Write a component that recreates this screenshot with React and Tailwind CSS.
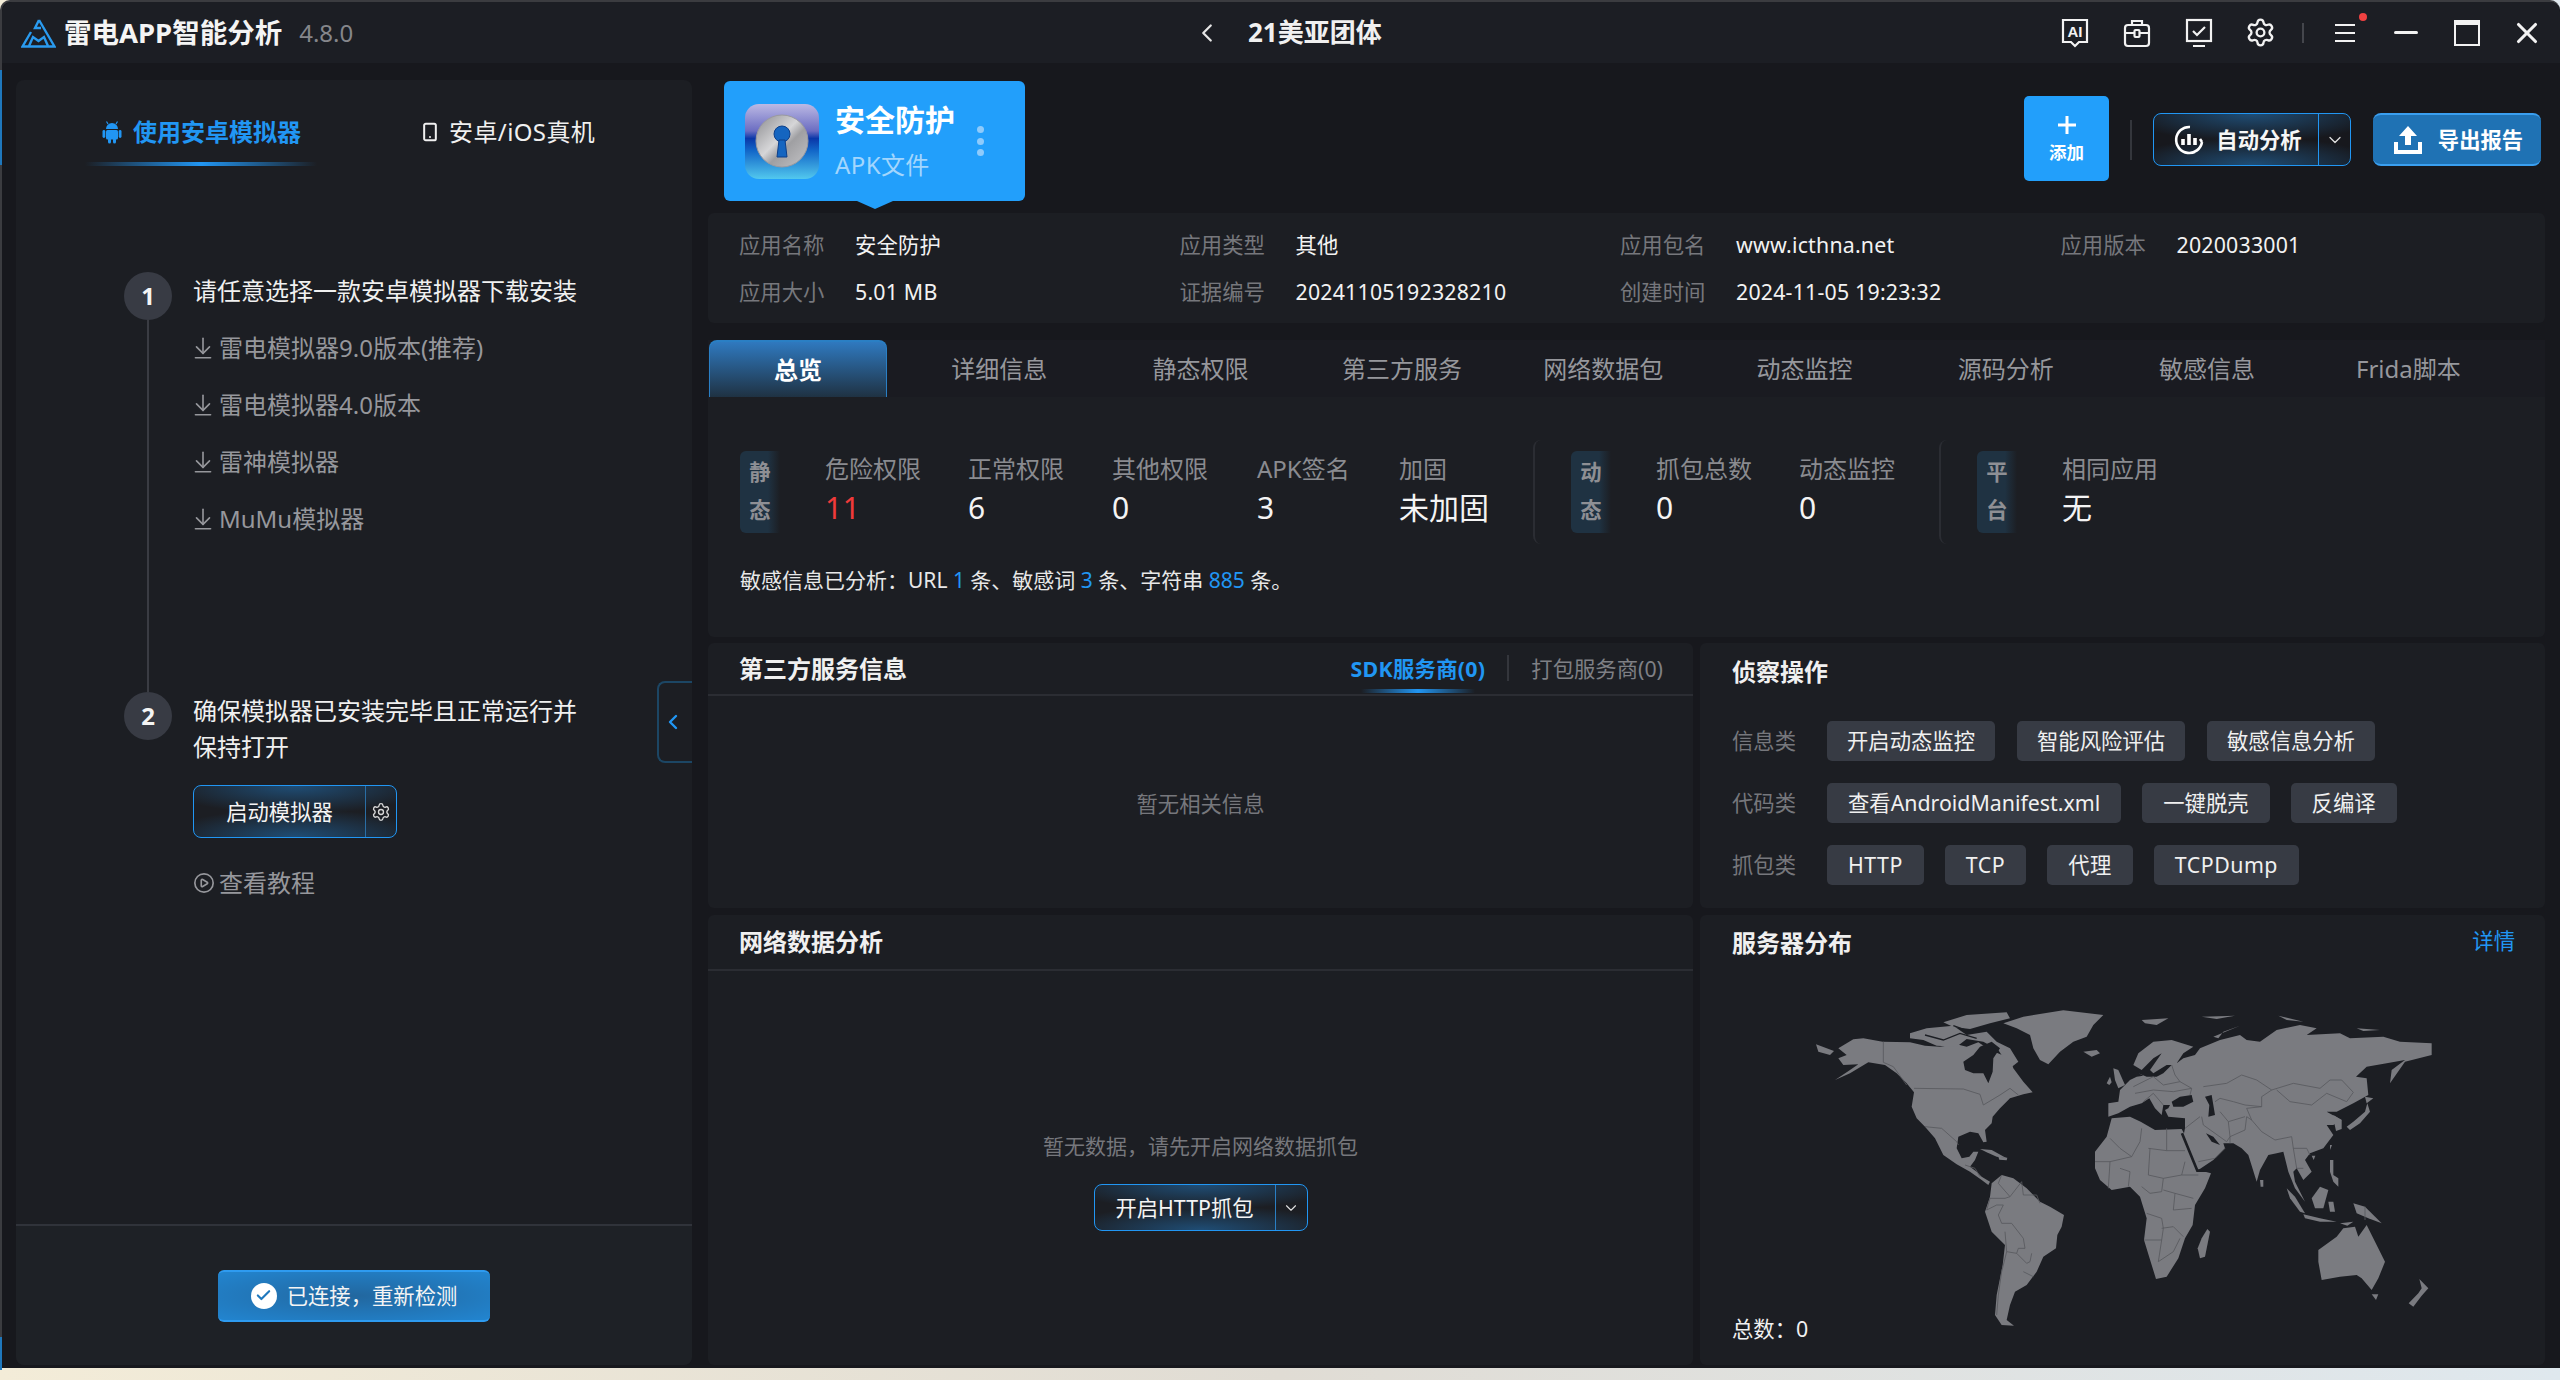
import { ArrowDownToLine, Check, ChevronDown, ChevronLeft, CirclePlay, Settings, Smartphone, X } from "lucide-react";

const infoRows = [
  [["应用名称", "安全防护"], ["应用类型", "其他"], ["应用包名", "www.icthna.net"], ["应用版本", "2020033001"]],
  [["应用大小", "5.01 MB"], ["证据编号", "20241105192328210"], ["创建时间", "2024-11-05 19:23:32"]],
];

const tabs = ["总览", "详细信息", "静态权限", "第三方服务", "网络数据包", "动态监控", "源码分析", "敏感信息", "Frida脚本"];

const glow =
  "bg-[radial-gradient(ellipse_65%_55%_at_50%_0%,#1f4d75,transparent),radial-gradient(ellipse_65%_55%_at_50%_100%,#1f4d75,transparent)]";

// outlines traced from the reference: left part in the americas crop, right part offset 930
const landLeft = [
  "85,130 130,103 160,100 218,110 300,112 345,122 390,125 440,118 470,125 505,112 540,135 600,160 610,190 640,230 668,262 640,268 600,280 570,310 548,335 545,355 525,375 530,410 520,412 505,385 480,380 445,395 440,430 455,460 478,455 490,440 505,440 495,465 480,485 500,500 515,515 540,530 535,540 515,525 480,500 440,478 400,450 375,400 345,365 320,340 305,305 312,262 290,235 260,205 225,180 175,172 120,205 75,225 120,195 145,178 100,180 85,160 110,150",
  "18,118 50,130 72,138 60,150 25,140",
  "300,85 350,70 430,62 470,90 530,80 560,110 600,130 625,170 600,190 565,135 520,110 470,102 440,125 380,122 340,105 300,100",
  "400,52 470,30 590,22 600,40 540,55 480,72 430,66",
  "580,55 640,35 760,16 880,30 850,60 830,95 790,110 750,140 715,178 690,165 670,130 660,90 620,70",
  "820,140 860,135 870,145 845,155",
  "510,432 545,435 590,460 560,455 530,442",
  "565,455 592,458 590,466 568,464",
  "545,535 575,510 610,520 650,550 690,590 720,605 762,630 755,665 742,690 738,730 700,755 680,800 650,840 615,860 600,900 590,945 612,962 575,960 555,930 560,870 578,780 585,720 545,680 525,620 540,575",
];

const landRight = [
  "-25,340 30,335 62,350 105,375 185,372 200,400 235,495 273,505 255,550 225,600 218,660 195,700 175,760 140,815 108,822 92,770 72,705 80,640 60,575 30,545 -25,555 -60,525 -75,490 -75,440 -40,395",
  "262,672 270,680 255,755 240,760 233,730 245,700",
  "-35,295 -5,290 0,255 30,225 50,215 70,212 55,205 80,215 110,215 130,205 155,180 140,180 100,205 90,195 125,145 100,160 65,195 40,180 55,145 100,110 155,105 220,125 190,145 170,175 190,160 225,150 240,130 300,105 360,90 380,105 420,110 470,75 540,60 590,70 560,90 660,85 690,100 790,95 840,110 935,115 935,150 855,170 810,235 815,195 855,165 800,175 740,185 708,215 740,220 745,270 700,295 650,320 620,320 665,345 640,360 620,360 640,390 610,430 570,445 555,465 575,500 550,525 530,490 520,500 525,530 555,590 525,550 505,500 490,440 470,445 445,450 420,495 410,530 385,450 365,430 340,415 310,415 315,430 280,465 235,495 215,460 190,395 195,370 195,340 145,335 135,315 145,310 150,300 130,300 125,330 105,310 88,280 65,295 30,305 -5,325 -35,335",
  "-40,235 -30,215 -25,232 -32,240",
  "-20,190 -5,195 15,240 -5,250 -15,225",
  "680,365 700,350 735,320 742,295 750,320 720,355 690,375",
  "735,275 760,280 740,295",
  "420,525 430,525 430,545 422,545",
  "500,550 525,575 555,625 540,620 510,580",
  "550,628 600,640 650,650 600,650 555,640",
  "575,580 600,545 625,555 610,610 585,610",
  "625,590 640,590 645,620 630,620",
  "630,465 640,465 640,510 655,520 655,545 640,530 630,500",
  "700,595 735,605 760,630 785,655 745,640 710,625",
  "630,420 636,420 630,435",
  "595,735 650,695 670,670 705,665 715,695 740,660 795,770 775,820 755,855 725,820 710,810 660,815 605,825 595,770",
  "755,868 775,868 768,885",
  "898,822 925,850 905,872 880,905 866,895 895,865 905,850",
  "65,45 145,40 110,60 75,55",
  "280,95 360,62 310,80 295,100",
  "475,32 550,50 500,45",
  "710,70 780,75 730,78",
  "245,35 345,32 290,42",
  "640,330 665,345 665,372 648,378 642,350",
  "575,452 586,452 581,465",
  "660,655 700,650 682,662",
];

const holesLeft = ["460,170 490,150 510,125 545,110 570,130 550,160 548,200 535,235 520,205 490,205 465,195"];
const holesRight = [
  "155,290 180,275 215,270 220,290 190,305 160,305",
  "255,275 275,270 285,330 265,335 268,300",
  "258,385 280,395 300,420 275,410",
];

const bordersLeft = [
  "220,110 220,172 250,185 290,240",
  "312,250 460,252 510,268 520,300 570,270 600,250 625,270",
  "345,365 395,370 440,410 445,420",
  "465,480 495,490 510,515",
  "575,510 565,535 600,575 585,580 540,580 530,615 560,600 580,600",
  "600,575 635,530 640,570 680,570 690,595",
  "580,600 565,630 575,655 605,655 640,700 645,730 625,730 620,745 650,775 660,770 665,745",
  "585,680 590,740 575,800 565,870 560,930",
  "590,740 620,745",
  "640,800 670,815",
];

const bordersRight = [
  "155,180 165,210 180,230 215,250 210,270",
  "250,245 320,235 365,210 410,225 455,255 425,275 425,305 375,300 340,290 300,280 285,290",
  "455,255 520,235 600,250 630,225 665,225 700,262 680,290 620,265 575,300 510,290 470,255",
  "425,305 380,310 395,345 425,380 465,405 515,395 520,430 560,430 570,450",
  "395,345 380,335 375,375 330,395 330,415",
  "245,335 250,360 285,385 320,410 330,395 325,350 300,320",
  "325,350 375,335",
  "195,370 240,335",
  "235,470 285,460 315,430",
  "520,430 530,490 550,490",
  "40,245 100,215 130,240 180,230",
  "45,265 100,255 160,260 215,250",
  "70,290 100,265 130,300",
  "65,370 60,410 35,455 0,430 -30,400",
  "85,430 140,437 195,437",
  "140,370 140,437",
  "90,430 85,510 130,520 125,560 90,565 65,545",
  "130,520 185,510 195,470",
  "185,510 235,510",
  "130,555 165,565 220,580",
  "165,565 160,615 215,610",
  "80,625 125,640 130,670 125,705 72,705",
  "125,670 160,665 190,695",
  "125,705 115,770 160,740 180,700",
  "35,455 -30,470 -75,470",
  "0,490 30,500 25,545",
  "-30,470 -35,550",
  "735,605 735,645",
];

function WorldMap() {
  return (
    <svg width="630" height="330" viewBox="0 0 1890 990">
      <g fill="#7a7b80">
        {landLeft.map((p) => (
          <polygon key={p} points={p} />
        ))}
      </g>
      <g fill="#1c1e23">
        {holesLeft.map((p) => (
          <polygon key={p} points={p} />
        ))}
      </g>
      <g fill="none" stroke="#1c1e23" strokeWidth="4">
        <polyline points="345,90 400,105 450,85 500,100" />
        <polyline points="430,62 480,80 540,60" />
      </g>
      <g fill="none" stroke="#58595e" strokeWidth="2.5">
        {bordersLeft.map((p) => (
          <polyline key={p} points={p} />
        ))}
      </g>
      <g transform="translate(930 0)">
        <g fill="#7a7b80">
          {landRight.map((p) => (
            <polygon key={p} points={p} />
          ))}
        </g>
        <g fill="#1c1e23">
          {holesRight.map((p) => (
            <polygon key={p} points={p} />
          ))}
        </g>
        <polyline points="186,385 232,497 280,497" fill="none" stroke="#1c1e23" strokeWidth="8" />
        <g fill="none" stroke="#58595e" strokeWidth="2.5">
          {bordersRight.map((p) => (
            <polyline key={p} points={p} />
          ))}
        </g>
      </g>
    </svg>
  );
}

function Logo() {
  return (
    <svg width="35" height="30" viewBox="0 0 35 30" fill="none" stroke="#2a9bef" strokeWidth="2.4">
      <path d="M18 2 L33.500 28.500 H1.500 L10 14" />
      <path d="M18 2 L14 10 H20" />
      <path d="M8 28 L12 19 L17.500 23 L23 19 L27 28" />
    </svg>
  );
}

function AndroidIcon() {
  return (
    <svg width="20" height="23" viewBox="0 0 20 23" fill="currentColor">
      <path d="M4 8 a6 6 0 0 1 12 0 z" />
      <path d="M6 3 L4.500 0.500 M14 3 L15.500 0.500" stroke="currentColor" strokeWidth="1.2" />
      <rect x="4" y="9" width="12" height="9.500" rx="1.500" />
      <rect x="0.500" y="9" width="2.800" height="8" rx="1.400" />
      <rect x="16.700" y="9" width="2.800" height="8" rx="1.400" />
      <rect x="6" y="17" width="3" height="5.500" rx="1.500" />
      <rect x="11" y="17" width="3" height="5.500" rx="1.500" />
    </svg>
  );
}

function AppIcon() {
  return (
    <svg width="74" height="75" viewBox="0 0 74 75">
      <defs>
        <linearGradient id="appBg" x1="0" y1="0" x2="0" y2="1">
          <stop offset="0" stopColor="#bcb9e4" />
          <stop offset="0.36" stopColor="#6b6dc2" />
          <stop offset="0.46" stopColor="#0a37a8" />
          <stop offset="0.62" stopColor="#1266c8" />
          <stop offset="1" stopColor="#52c8ee" />
        </linearGradient>
        <linearGradient id="appMetal" x1="0" y1="0" x2="1" y2="1">
          <stop offset="0" stopColor="#8b8b8e" />
          <stop offset="0.45" stopColor="#d6d6d8" />
          <stop offset="0.6" stopColor="#9f9fa2" />
          <stop offset="1" stopColor="#c4c4c7" />
        </linearGradient>
      </defs>
      <rect width="74" height="75" rx="14" fill="url(#appBg)" />
      <circle cx="37" cy="37" r="26" fill="url(#appMetal)" stroke="#9a9aa0" />
      <circle cx="37" cy="30" r="8" fill="#1565c0" stroke="#0d3f8a" />
      <path d="M34 36 H40 L42 53 H32 Z" fill="#1565c0" stroke="#0d3f8a" />
    </svg>
  );
}

function TopIcons() {
  const s = { fill: "none", stroke: "#f2f2f2", strokeWidth: 2.2 };
  return (
    <div className="flex items-center">
      <svg width="28" height="30" viewBox="0 0 28 30">
        <path d="M2 2 H26 V24 H18 L14 28 L10 24 H2 Z" {...s} />
        <text x="14" y="19" textAnchor="middle" fontSize="15" fontWeight="700" fill="#f2f2f2" fontFamily="Liberation Sans">
          AI
        </text>
      </svg>
      <svg width="30" height="30" viewBox="0 0 30 30" className="ml-[33px]">
        <rect x="3" y="7" width="24" height="21" rx="3" {...s} />
        <path d="M10 7 V3 H20 V7 M3 15 H12 M18 15 H27" {...s} />
        <rect x="12.500" y="12" width="5" height="7" rx="1" {...s} />
      </svg>
      <svg width="30" height="30" viewBox="0 0 30 30" className="ml-[32px]">
        <rect x="3" y="2" width="24" height="21" {...s} />
        <path d="M9 13 L13 17 L21 9 M9 28 H21" {...s} />
      </svg>
      <Settings size={31} strokeWidth={1.8} color="#f2f2f2" className="ml-[31px]" />
      <div className="ml-[26px] h-[20px] w-[2px] bg-[#44464c]"></div>
      <div className="relative ml-[30px]">
        <svg width="22" height="22" viewBox="0 0 22 22" className="block">
          <path d="M1 3 H21 M1 11 H21 M1 19 H21" {...s} />
        </svg>
        <span className="absolute -top-[9px] -right-[11px] h-[8px] w-[8px] rounded-full bg-[#f04141]"></span>
      </div>
      <div className="ml-[38px] h-[3px] w-[24px] rounded bg-[#f2f2f2]"></div>
      <div className="ml-[36px] h-[26px] w-[26px] border-2 border-t-[5px] border-[#f2f2f2]"></div>
      <X size={34} strokeWidth={2.2} color="#f2f2f2" className="ml-[30px]" />
    </div>
  );
}

function TitleBar() {
  return (
    <div className="flex h-[61px] items-center rounded-tl-[10px] rounded-tr-[10px] bg-[#1c1e24]">
      <div className="flex w-[1190px] items-center pl-[19px]">
        <Logo />
        <span className="ml-[8px] text-[27.500px] font-bold text-[#f4f4f4]">雷电APP智能分析</span>
        <span className="ml-[17px] text-[24px] text-[#85868b]">4.8.0</span>
      </div>
      <div className="flex flex-1 items-center">
        <ChevronLeft size={30} strokeWidth={1.8} color="#e6e6e6" />
        <span className="ml-[26px] text-[26px] font-bold text-[#f0f0f0]">21美亚团体</span>
      </div>
      <div className="pr-[16px]">
        <TopIcons />
      </div>
    </div>
  );
}

function DownloadLink({ children }) {
  return (
    <div className="flex h-[57px] items-center text-[24px] text-[#96979c]">
      <ArrowDownToLine size={26} strokeWidth={1.5} className="-ml-[3px]" />
      <span className="ml-[3px]">{children}</span>
    </div>
  );
}

function LeftPanel() {
  return (
    <div className="relative ml-[14px] flex h-[1285px] w-[676px] flex-col rounded-[8px] bg-[#1c1e23]">
      <div className="flex-1">
        <div className="flex h-[85px]">
          <div className="relative ml-[86px] flex items-center pt-[19px] text-[#2196f3]">
            <AndroidIcon />
            <span className="ml-[11px] text-[24px] font-bold">使用安卓模拟器</span>
            <div className="absolute top-[82px] -left-[17px] h-[4px] w-[232px] bg-[linear-gradient(90deg,transparent,#2196f3,transparent)]"></div>
          </div>
          <div className="ml-[119px] flex items-center pt-[19px] text-[#f0f0f0]">
            <Smartphone size={20} strokeWidth={2.4} />
            <span className="ml-[9px] text-[24px] tracking-[0.4px]">安卓/iOS真机</span>
          </div>
        </div>

        <div className="mt-[107px] flex">
          <div className="ml-[108px] flex w-[48px] flex-col items-center">
            <div className="flex h-[48px] w-[48px] items-center justify-center rounded-full bg-[#383b44] text-[24px] font-bold text-[#f4f4f4]">1</div>
            <div className="h-[372px] w-[2px] bg-[#3a3c43]"></div>
            <div className="flex h-[48px] w-[48px] items-center justify-center rounded-full bg-[#383b44] text-[24px] font-bold text-[#f4f4f4]">2</div>
          </div>
          <div className="ml-[21px] w-[400px] pt-[1px]">
            <div className="h-[420px]">
              <div className="text-[24px] leading-[36px] text-[#f0f0f0]">请任意选择一款安卓模拟器下载安装</div>
              <div className="mt-[10px]">
                <DownloadLink>雷电模拟器9.0版本(推荐)</DownloadLink>
                <DownloadLink>雷电模拟器4.0版本</DownloadLink>
                <DownloadLink>雷神模拟器</DownloadLink>
                <DownloadLink>MuMu模拟器</DownloadLink>
              </div>
            </div>
            <div className="w-[390px] text-[24px] leading-[36px] text-[#f0f0f0]">确保模拟器已安装完毕且正常运行并保持打开</div>
            <div className={`mt-[20px] flex h-[53px] w-[204px] rounded-[8px] border-[1.5px] border-[#2196f3] ${glow}`}>
              <div className="flex w-[172px] items-center justify-center border-r border-[#2a6ea5] text-[21.33px] text-[#f4f4f4]">启动模拟器</div>
              <div className="flex flex-1 items-center justify-center">
                <Settings size={20} strokeWidth={1.6} color="#d8d8d8" />
              </div>
            </div>
            <div className="mt-[27px] flex h-[36px] items-center text-[24px] text-[#96979c]">
              <CirclePlay size={22} strokeWidth={1.8} />
              <span className="ml-[4px]">查看教程</span>
            </div>
          </div>
        </div>
      </div>

      <div className="flex h-[141px] items-center justify-center rounded-b-[8px] border-t-2 border-[#30333a] bg-[#1e2126]">
        <div className="flex h-[52px] w-[272px] items-center justify-center rounded-[6px] border-t-2 border-b-2 border-[#2e9bf0] bg-[radial-gradient(ellipse_at_center,#22679f,#2285d0)] text-[21.33px] text-[#f4f4f4]">
          <span className="flex h-[26px] w-[26px] items-center justify-center rounded-full bg-white">
            <Check size={17} strokeWidth={3} color="#1f78bd" />
          </span>
          <span className="ml-[10px]">已连接，重新检测</span>
        </div>
      </div>

      <div className="absolute top-[601px] right-0 flex h-[82px] w-[35px] items-center justify-center rounded-l-[8px] border-t-2 border-b-2 border-l-2 border-[#1c4664] pr-[5px]">
        <ChevronLeft size={24} strokeWidth={2.4} color="#2196f3" />
      </div>
    </div>
  );
}

function AppCard() {
  return (
    <div className="relative mt-[1px] ml-[16px] flex h-[120px] w-[301px] items-center rounded-[6px] bg-[#229ffb] pl-[21px]">
      <AppIcon />
      <div className="ml-[16px] w-[120px]">
        <div className="-mt-[2px] text-[30px] leading-[40px] font-bold text-white">安全防护</div>
        <div className="mt-[9px] text-[24px] leading-[32px] tracking-[0.4px] text-[#a3d6fd]">APK文件</div>
      </div>
      <div className="ml-[22px] flex flex-col gap-[4.500px]">
        <span className="h-[7px] w-[7px] rounded-full bg-[#8fcbfb]"></span>
        <span className="h-[7px] w-[7px] rounded-full bg-[#8fcbfb]"></span>
        <span className="h-[7px] w-[7px] rounded-full bg-[#8fcbfb]"></span>
      </div>
      <div className="absolute top-full left-1/2 h-0 w-0 -translate-x-1/2 border-x-[18px] border-t-[8px] border-x-transparent border-t-[#229ffb]"></div>
    </div>
  );
}

function HeaderActions() {
  return (
    <div className="flex items-start pr-[4px]">
      <div className="mt-[16px] flex h-[85px] w-[85px] flex-col items-center justify-center rounded-[5px] bg-[#229ffb] text-white">
        <svg width="20" height="20" viewBox="0 0 20 20" fill="none" stroke="white" strokeWidth="3">
          <path d="M10 1 V19 M1 10 H19" />
        </svg>
        <span className="mt-[6px] text-[17.500px] leading-[22px] font-bold">添加</span>
      </div>
      <div className="mt-[40px] ml-[21px] h-[40px] w-[2px] bg-[#34363c]"></div>
      <div className={`mt-[33px] ml-[21px] flex h-[53px] w-[198px] rounded-[8px] border-[1.5px] border-[#2196f3] ${glow}`}>
        <div className="flex w-[165px] items-center justify-center border-r-[1.5px] border-[#2196f3] pl-[4px] text-[#f6f6f6]">
          <svg width="30" height="30" viewBox="0 0 30 30" fill="none" stroke="white" strokeWidth="2.6">
            <path d="M28 17 A13 13 0 1 1 16 2 M28 17 L26 14 M21 27 L16 28" />
            <path d="M9 20 V14 M15 20 V9 M21 20 V13" strokeWidth="3.6" />
          </svg>
          <span className="ml-[12px] text-[21.33px] font-bold">自动分析</span>
        </div>
        <div className="flex flex-1 items-center justify-center">
          <ChevronDown size={20} strokeWidth={1.5} color="#e0e0e0" />
        </div>
      </div>
      <div className="mt-[33px] ml-[22px] flex h-[53px] w-[168px] items-center justify-center rounded-[8px] border-t-2 border-b-2 border-[#3a9ff0] bg-[#1f72b4] pl-[2px] text-white">
        <svg width="30" height="30" viewBox="0 0 30 30" fill="white">
          <path d="M15 1 L24 11 H18 V20 H12 V11 H6 Z" />
          <path d="M1 17 H5 V25 H25 V17 H29 V29 H1 Z" />
        </svg>
        <span className="ml-[15px] text-[21.33px] font-bold">导出报告</span>
      </div>
    </div>
  );
}

function InfoBlock() {
  return (
    <div className="h-[110px] rounded-[6px] bg-[#1c1e23] pt-[8px] pl-[31px]">
      {infoRows.map((row) => (
        <div key={row[0][0]} className="flex h-[47px] items-center text-[21.33px]">
          {row.map(([label, value]) => (
            <div key={label} className="flex w-[440.500px]">
              <span className="w-[116px] text-[#76777c]">{label}</span>
              <span className="tracking-[0.2px] text-[#f2f2f2]">{value}</span>
            </div>
          ))}
        </div>
      ))}
    </div>
  );
}

function TabBar() {
  return (
    <div className="mt-[17px] flex h-[57px] gap-[23.300px] bg-[#1a1b21] pl-[1px]">
      {tabs.map((t, i) =>
        i === 0 ? (
          <div
            key={t}
            className="flex w-[178px] items-center justify-center rounded-t-[8px] border-x border-t-2 border-[#2a7fc4] bg-[linear-gradient(180deg,#2f79bf,#1f3243)] text-[24px] font-bold text-white"
          >
            {t}
          </div>
        ) : (
          <div key={t} className="flex w-[178px] items-center justify-center text-[24px] text-[#96979c]">
            {t}
          </div>
        ),
      )}
    </div>
  );
}

function SideTag({ a, b }) {
  return (
    <div className="flex h-[82px] w-[40px] flex-col items-center justify-between rounded-l-[6px] bg-[linear-gradient(90deg,#1f3242_70%,transparent)] pt-[7px] pb-[9px] text-[21.33px] leading-[28px] font-bold text-[#8e8f94]">
      <span>{a}</span>
      <span>{b}</span>
    </div>
  );
}

function Stat({ label, value, width, red, big }) {
  return (
    <div className="-mt-[3px]" style={{ width }}>
      <div className="text-[24px] leading-[30px] text-[#8a8b90]">{label}</div>
      <div className={`mt-[4px] text-[30px] leading-[40px] ${big ? "" : "tracking-[0.5px]"} ${red ? "text-[#f03a3a]" : "text-[#f4f4f4]"}`}>{value}</div>
    </div>
  );
}

function Divider() {
  return <div className="h-[104px] w-[8px] rounded-l-[8px] border-l-2 border-[#2b2d33]"></div>;
}

function Overview() {
  return (
    <div className="h-[240px] rounded-b-[6px] bg-[#1c1e23] pt-[43px] pl-[32px]">
      <div className="flex h-[104px] items-center">
        <SideTag a="静" b="态" />
        <div className="ml-[45px] flex">
          <Stat label="危险权限" value="11" width={143} red />
          <Stat label="正常权限" value="6" width={144} />
          <Stat label="其他权限" value="0" width={145} />
          <Stat label="APK签名" value="3" width={142} />
          <Stat label="加固" value="未加固" width={134} big />
        </div>
        <Divider />
        <div className="ml-[30px]">
          <SideTag a="动" b="态" />
        </div>
        <div className="ml-[45px] flex">
          <Stat label="抓包总数" value="0" width={143} />
          <Stat label="动态监控" value="0" width={140} />
        </div>
        <Divider />
        <div className="ml-[30px]">
          <SideTag a="平" b="台" />
        </div>
        <div className="ml-[45px]">
          <Stat label="相同应用" value="无" width={140} big />
        </div>
      </div>
      <div className="mt-[21px] text-[21px] leading-[30px] text-[#e8e8e8]">
        敏感信息已分析：URL <span className="text-[#2196f3]">1</span> 条、敏感词 <span className="text-[#2196f3]">3</span> 条、字符串{" "}
        <span className="text-[#2196f3]">885</span> 条。
      </div>
    </div>
  );
}

function ThirdParty() {
  return (
    <div className="flex w-[985px] flex-col rounded-[6px] bg-[#1c1e23]">
      <div className="flex h-[53px] items-center justify-between border-b-2 border-[#2b2d33] pr-[30px] pl-[31px]">
        <span className="text-[24px] font-bold text-[#f0f0f0]">第三方服务信息</span>
        <div className="flex items-center text-[21.33px]">
          <div className="relative font-bold tracking-[0.3px] text-[#2196f3]">
            SDK服务商(0)
            <div className="absolute top-[36px] left-[11px] h-[4px] w-[114px] bg-[linear-gradient(90deg,transparent,#2196f3,transparent)]"></div>
          </div>
          <div className="mx-[22px] h-[26px] w-[2px] bg-[#34363c]"></div>
          <span className="text-[#7f8085]">打包服务商(0)</span>
        </div>
      </div>
      <div className="flex flex-1 items-center justify-center pt-[4px] text-[21.33px] text-[#76777c]">暂无相关信息</div>
    </div>
  );
}

function Chip({ children, wide, latin }) {
  return (
    <div
      className={`flex h-[40px] items-center rounded-[5px] bg-[#373b44] text-[21.33px] text-[#f0f0f0] ${wide ? "px-[21px]" : "px-[20px]"} ${latin ? "tracking-[0.5px]" : ""}`}
    >
      {children}
    </div>
  );
}

function OpsRow({ label, items, gap, wide, latin }) {
  return (
    <div className="flex items-center text-[21.33px]">
      <span className="w-[95px] text-[#76777c]">{label}</span>
      <div className={`flex ${gap}`}>
        {items.map((t) => (
          <Chip key={t} wide={wide} latin={latin}>
            {t}
          </Chip>
        ))}
      </div>
    </div>
  );
}

function Operations() {
  return (
    <div className="w-[845px] rounded-[6px] bg-[#1c1e23] pl-[32px]">
      <div className="pt-[14px] text-[24px] leading-[30px] font-bold text-[#f0f0f0]">侦察操作</div>
      <div className="mt-[34px] flex flex-col gap-[22px]">
        <OpsRow label="信息类" items={["开启动态监控", "智能风险评估", "敏感信息分析"]} gap="gap-[22px]" />
        <OpsRow label="代码类" items={["查看AndroidManifest.xml", "一键脱壳", "反编译"]} gap="gap-[21px]" wide />
        <OpsRow label="抓包类" items={["HTTP", "TCP", "代理", "TCPDump"]} gap="gap-[21px]" wide latin />
      </div>
    </div>
  );
}

function NetworkPanel() {
  return (
    <div className="flex w-[985px] flex-col rounded-[6px] bg-[#1c1e23]">
      <div className="flex h-[56px] items-center border-b-2 border-[#2b2d33] pl-[31px] text-[24px] font-bold text-[#f0f0f0]">网络数据分析</div>
      <div className="flex flex-1 flex-col items-center pt-[160px]">
        <div className="text-[21px] leading-[30px] text-[#76777c]">暂无数据，请先开启网络数据抓包</div>
        <div className={`mt-[23px] flex h-[47px] w-[214px] rounded-[8px] border-[1.5px] border-[#2196f3] ${glow}`}>
          <div className="flex w-[181px] items-center justify-center border-r-[1.5px] border-[#2a7fc4] text-[21.33px] text-[#f4f4f4]">开启HTTP抓包</div>
          <div className="flex flex-1 items-center justify-center">
            <ChevronDown size={18} strokeWidth={1.5} color="#e0e0e0" />
          </div>
        </div>
      </div>
    </div>
  );
}

function ServerPanel() {
  return (
    <div className="flex w-[845px] flex-col rounded-[6px] bg-[#1c1e23]">
      <div className="flex h-[56px] items-center justify-between pr-[30px] pl-[32px]">
        <span className="text-[24px] font-bold text-[#f0f0f0]">服务器分布</span>
        <span className="-mt-[4px] text-[21.33px] text-[#2196f3]">详情</span>
      </div>
      <div className="mt-[34px] pl-[110px]">
        <WorldMap />
      </div>
      <div className="-mt-[21px] pl-[32px] text-[21.33px] leading-[30px] text-[#f0f0f0]">总数：0</div>
    </div>
  );
}

export default function App() {
  return (
    <div className="flex h-[1380px] w-[2560px] flex-col overflow-hidden bg-[linear-gradient(90deg,#f3ecd8,#e0dcd4_50%,#dfe8ee)] font-['Noto_Sans','Noto_Sans_CJK_SC',sans-serif]">
      <div className="relative h-[1368px] rounded-t-[10px] border-t-2 border-l-2 border-[#3b3c40] bg-[#17181d]">
        <div className="absolute top-[68px] -left-[2px] h-[95px] w-[2px] bg-[#1f78bd]"></div>
        <div className="absolute top-[1335px] -left-[2px] h-[33px] w-[2px] bg-[#1f78bd]"></div>
        <TitleBar />
        <div className="mt-[17px] flex">
          <LeftPanel />
          <div className="ml-[16px] w-[1837px]">
            <div className="flex h-[133px] items-start justify-between">
              <AppCard />
              <HeaderActions />
            </div>
            <InfoBlock />
            <TabBar />
            <Overview />
            <div className="mt-[6px] flex h-[265px] gap-[7px]">
              <ThirdParty />
              <Operations />
            </div>
            <div className="mt-[7px] flex h-[450px] gap-[7px]">
              <NetworkPanel />
              <ServerPanel />
            </div>
          </div>
        </div>
      </div>
    </div>
  );
}
